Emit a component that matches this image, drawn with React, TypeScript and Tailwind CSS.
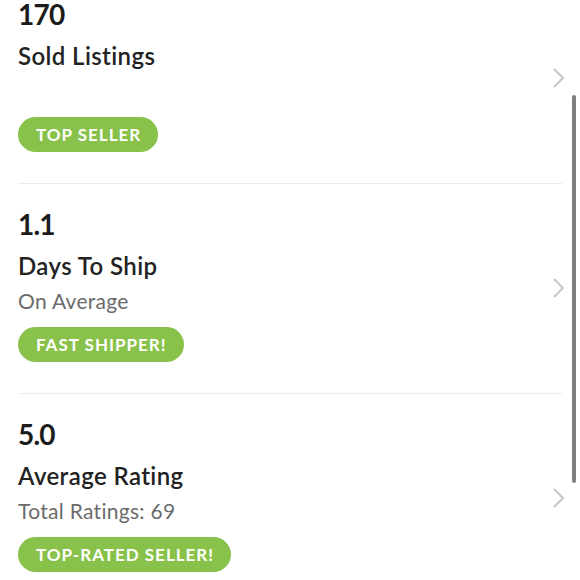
import React from 'react';

type Stat = {
  value: string;
  label: string;
  note: string;
  badge: string;
};

const stats: Stat[] = [
  { value: '170', label: 'Sold Listings', note: '', badge: 'TOP SELLER' },
  { value: '1.1', label: 'Days To Ship', note: 'On Average', badge: 'FAST SHIPPER!' },
  { value: '5.0', label: 'Average Rating', note: 'Total Ratings: 69', badge: 'TOP-RATED SELLER!' },
];

const Chevron: React.FC = () => (
  <svg width="12" height="20" viewBox="0 0 12 20" fill="none" className="-mr-[3px] mt-[5px] shrink-0">
    <path d="M1.5 1.5 L10 10 L1.5 18.5" stroke="#c6c6c6" strokeWidth="2" strokeLinecap="round" strokeLinejoin="round" />
  </svg>
);

const StatRow: React.FC<{ stat: Stat; last: boolean }> = ({ stat, last }) => (
  <div className="px-[18px]">
    <div className={`flex items-center justify-between pt-[24px] pb-[31px] ${last ? '' : 'border-b border-[#ececec]'}`}>
      <div className="flex flex-col items-start">
        <div className="text-[28px] leading-[32px] font-bold text-[#1c1c1c] tracking-[-0.8px]">{stat.value}</div>
        <div className="mt-[12px] text-[24px] leading-[28px] font-semibold text-[#222] tracking-[0.4px]">{stat.label}</div>
        <div className="mt-[8px] h-[26px] text-[21px] leading-[26px] text-[#6b6b6b] tracking-[0.3px]">{stat.note}</div>
        <div className="mt-[13px] h-[35px] pl-[18px] pr-[17px] rounded-full bg-[#89c24a] flex items-center text-white text-[17px] font-bold tracking-[1px]">
          {stat.badge}
        </div>
      </div>
      <Chevron />
    </div>
  </div>
);

export default function App() {
  return (
    <div className="relative w-[580px] h-[580px] overflow-hidden bg-white" style={{ fontFamily: 'Lato, "Open Sans", sans-serif' }}>
      <div className="-mt-[26px]">
        {stats.map((s, i) => (
          <StatRow key={s.value} stat={s} last={i === stats.length - 1} />
        ))}
      </div>
      <div className="absolute right-[4px] top-[95px] w-[4px] h-[388px] rounded-full bg-[#7f7f7f]" />
    </div>
  );
}
